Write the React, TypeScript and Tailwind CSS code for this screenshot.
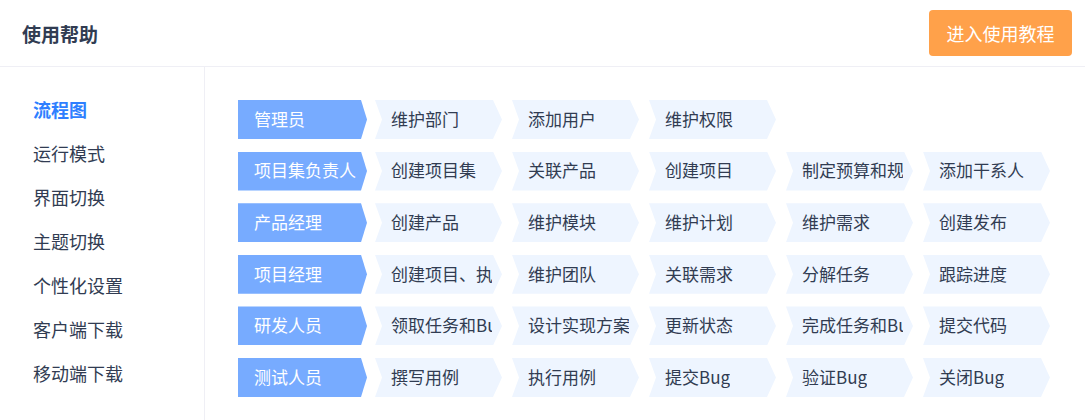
import React from "react";

const menu = ["流程图", "运行模式", "界面切换", "主题切换", "个性化设置", "客户端下载", "移动端下载"];

const flows: { role: string; steps: string[] }[] = [
  { role: "管理员", steps: ["维护部门", "添加用户", "维护权限"] },
  { role: "项目集负责人", steps: ["创建项目集", "关联产品", "创建项目", "制定预算和规划", "添加干系人"] },
  { role: "产品经理", steps: ["创建产品", "维护模块", "维护计划", "维护需求", "创建发布"] },
  { role: "项目经理", steps: ["创建项目、执行", "维护团队", "关联需求", "分解任务", "跟踪进度"] },
  { role: "研发人员", steps: ["领取任务和Bug", "设计实现方案", "更新状态", "完成任务和Bug", "提交代码"] },
  { role: "测试人员", steps: ["撰写用例", "执行用例", "提交Bug", "验证Bug", "关闭Bug"] },
];

export default function App() {
  return (
    <div className="w-[1085px] h-[420px] bg-white overflow-hidden font-['Noto_Sans_CJK_SC','Noto_Sans',sans-serif] text-[#313c52]">
      {/* header */}
      <div className="h-[67px] flex items-center justify-between pl-[22px] pr-[13px] border-b border-[#efeff5]">
        <h1 className="text-[19px] font-bold leading-none">使用帮助</h1>
        <button className="w-[143px] h-[46px] rounded-[4px] bg-[#ffa14a] text-white text-[18px] leading-none">
          进入使用教程
        </button>
      </div>

      <div className="flex h-[353px]">
        {/* sidebar */}
        <div className="w-[205px] shrink-0 border-r border-[#efeff5] pt-[21px] pl-[33px]">
          {menu.map((item, i) => (
            <div
              key={item}
              className={`h-[44px] flex items-center pb-[1px] text-[18px] ${
                i === 0 ? "text-[#2e7fff] font-bold" : "text-[#313c52]"
              }`}
            >
              {item}
            </div>
          ))}
        </div>

        {/* flow chart */}
        <div className="pl-[33px] pt-[33px] flex flex-col gap-[12.6px]">
          {flows.map((row) => (
            <div key={row.role} className="flex h-[39px]">
              <div className="w-[129px] h-full bg-[#77abff] text-white text-[17px] flex items-center pl-[16px] pb-[2px] mr-[8px] whitespace-nowrap [clip-path:polygon(0_0,calc(100%_-_6px)_0,100%_50%,calc(100%_-_6px)_100%,0_100%)]">
                {row.role}
              </div>
              {row.steps.map((s) => (
                <div
                  key={s}
                  className="w-[127px] h-full bg-[#eef5ff] text-[17px] text-[#313c52] flex items-center pl-[16px] pr-[10px] pb-[2px] mr-[10px] [clip-path:polygon(0_0,calc(100%_-_9px)_0,100%_50%,calc(100%_-_9px)_100%,0_100%,7px_50%)]"
                >
                  <span className="block overflow-hidden whitespace-nowrap">{s}</span>
                </div>
              ))}
            </div>
          ))}
        </div>
      </div>
    </div>
  );
}
